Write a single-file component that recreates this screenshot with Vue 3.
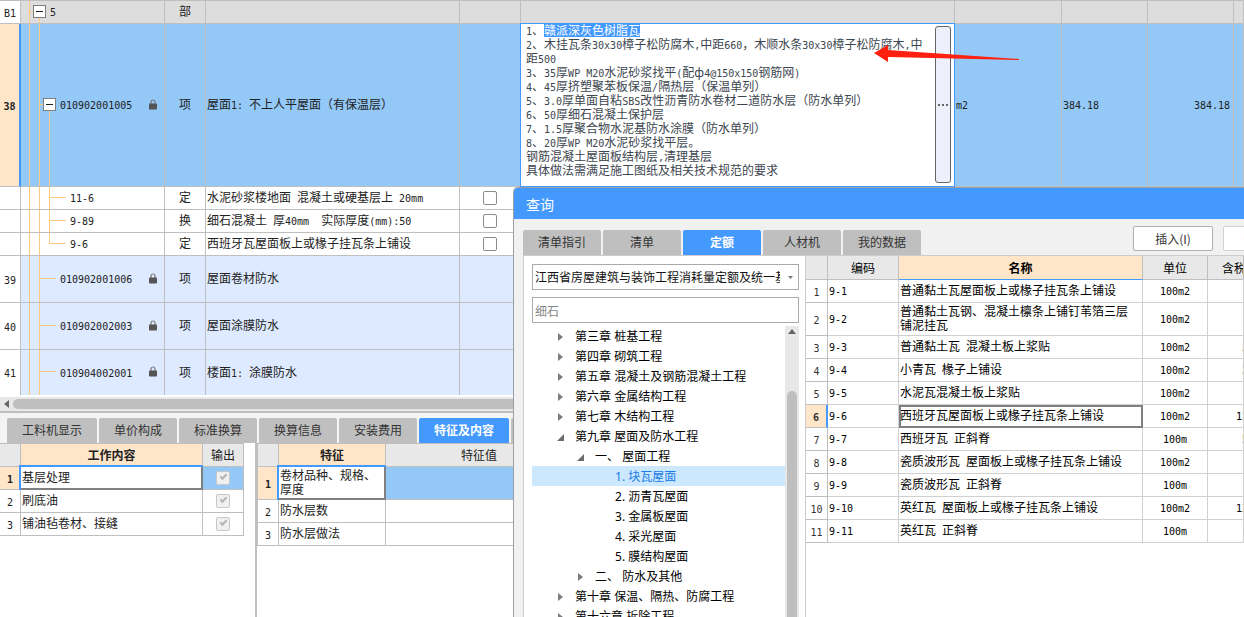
<script setup>
import { h, ref } from 'vue'

// Sets half-width runs in the grid's monospaced face, next to full-width characters.
const Txt = (props) =>
  String(props.t)
    .split(/([\x20-\x7e]+)/)
    .map((s, i) => (i % 2 ? h('span', { class: 'lat' }, s) : s))
Txt.props = ['t']

const billRows = [
  { no: 'B1', kind: 'part', code: '5', type: '部', name: '' },
  { no: '38', kind: 'current', code: '010902001005', lock: true, type: '项', name: '屋面1: 不上人平屋面（有保温层）', unit: 'm2', expr: '384.18', qty: '384.18' },
  { no: '', kind: 'sub', code: '11-6', type: '定', name: '水泥砂浆楼地面 混凝土或硬基层上 20mm', check: true },
  { no: '', kind: 'sub', code: '9-89', type: '换', name: '细石混凝土 厚40mm  实际厚度(mm):50', check: true },
  { no: '', kind: 'sub last', code: '9-6', type: '定', name: '西班牙瓦屋面板上或椽子挂瓦条上铺设', check: true },
  { no: '39', kind: 'item', code: '010902001006', lock: true, type: '项', name: '屋面卷材防水' },
  { no: '40', kind: 'item', code: '010902002003', lock: true, type: '项', name: '屋面涂膜防水' },
  { no: '41', kind: 'item end', code: '010904002001', lock: true, type: '项', name: '楼面1: 涂膜防水' },
]

const featureLines = [
  '2、木挂瓦条30x30樟子松防腐木,中距660，木顺水条30x30樟子松防腐木,中距500',
  '3、35厚WP M20水泥砂浆找平(配ф4@150x150钢筋网)',
  '4、45厚挤塑聚苯板保温/隔热层（保温单列）',
  '5、3.0厚单面自粘SBS改性沥青防水卷材二道防水层（防水单列）',
  '6、50厚细石混凝土保护层',
  '7、1.5厚聚合物水泥基防水涂膜（防水单列）',
  '8、20厚WP M20水泥砂浆找平层。',
  '钢筋混凝土屋面板结构层,清理基层',
  '具体做法需满足施工图纸及相关技术规范的要求',
]

const bottomTabs = ['工料机显示', '单价构成', '标准换算', '换算信息', '安装费用', '特征及内容']
const bottomTab = ref('特征及内容')
const works = ['基层处理', '刷底油', '铺油毡卷材、接缝']
const features = ['卷材品种、规格、厚度', '防水层数', '防水层做法']

const queryTabs = ['清单指引', '清单', '定额', '人材机', '我的数据']
const queryTab = ref('定额')
const library = ref('a')
const keyword = ref('细石')

const chapters = [
  { lv: 1, s: 'shut', t: '第三章 桩基工程' },
  { lv: 1, s: 'shut', t: '第四章 砌筑工程' },
  { lv: 1, s: 'shut', t: '第五章 混凝土及钢筋混凝土工程' },
  { lv: 1, s: 'shut', t: '第六章 金属结构工程' },
  { lv: 1, s: 'shut', t: '第七章 木结构工程' },
  { lv: 1, s: 'open', t: '第九章 屋面及防水工程' },
  { lv: 2, s: 'open', t: '一、 屋面工程' },
  { lv: 3, s: 'leaf', t: '1. 块瓦屋面', on: true },
  { lv: 3, s: 'leaf', t: '2. 沥青瓦屋面' },
  { lv: 3, s: 'leaf', t: '3. 金属板屋面' },
  { lv: 3, s: 'leaf', t: '4. 采光屋面' },
  { lv: 3, s: 'leaf', t: '5. 膜结构屋面' },
  { lv: 2, s: 'shut', t: '二、 防水及其他' },
  { lv: 1, s: 'shut', t: '第十章 保温、隔热、防腐工程' },
  { lv: 1, s: 'shut', t: '第十六章 拆除工程' },
]

const quotas = [
  { code: '9-1', name: '普通黏土瓦屋面板上或椽子挂瓦条上铺设', unit: '100m2' },
  { code: '9-2', name: '普通黏土瓦钢、混凝土檩条上铺钉苇箔三层铺泥挂瓦', unit: '100m2', price: '1' },
  { code: '9-3', name: '普通黏土瓦 混凝土板上浆贴', unit: '100m2', price: '2' },
  { code: '9-4', name: '小青瓦 椽子上铺设', unit: '100m2', price: '2' },
  { code: '9-5', name: '水泥瓦混凝土板上浆贴', unit: '100m2' },
  { code: '9-6', name: '西班牙瓦屋面板上或椽子挂瓦条上铺设', unit: '100m2', price: '13' },
  { code: '9-7', name: '西班牙瓦 正斜脊', unit: '100m', price: '5' },
  { code: '9-8', name: '瓷质波形瓦 屋面板上或椽子挂瓦条上铺设', unit: '100m2' },
  { code: '9-9', name: '瓷质波形瓦 正斜脊', unit: '100m' },
  { code: '9-10', name: '英红瓦 屋面板上或椽子挂瓦条上铺设', unit: '100m2', price: '12' },
  { code: '9-11', name: '英红瓦 正斜脊', unit: '100m', price: '1' },
]
</script>

<template>
  <div class="app">
    <table class="grid bill">
      <colgroup>
        <col class="w-no" /><col class="w-code" /><col class="w-type" /><col class="w-name" /><col class="w-check" />
        <col class="w-feature" /><col class="w-unit" /><col class="w-qty" /><col class="w-qty" /><col />
      </colgroup>
      <tbody>
        <tr v-for="(r, i) in billRows" :key="i" :class="r.kind">
          <th scope="row"><Txt :t="r.no" /></th>
          <td class="code">
            <div class="node">
              <button v-if="r.kind === 'part' || r.kind === 'current'" class="toggle" aria-label="折叠"></button>
              <i v-else class="stub"></i>
              <span class="num"><Txt :t="r.code" /></span>
              <svg v-if="r.lock" class="lock" width="8" height="11" viewBox="0 0 8 11">
                <path d="M2 5V3a2 2 0 0 1 4 0v2" fill="none" stroke="#777" stroke-width="1.2" />
                <rect y="4.5" width="8" height="6" rx=".8" fill="#555" />
              </svg>
            </div>
          </td>
          <td class="mid">{{ r.type }}</td>
          <td><Txt :t="r.name" /></td>
          <td class="tick"><input v-if="r.check" type="checkbox" class="box" :aria-label="r.code" /></td>
          <td class="feature">
            <div v-if="r.kind === 'current'" class="editor">
              <div class="lines" contenteditable="true" role="textbox" aria-multiline="true" aria-label="项目特征" spellcheck="false">
                <div><Txt t="1、" /><mark>赣派深灰色树脂瓦</mark></div>
                <div v-for="l in featureLines" :key="l"><Txt :t="l" /></div>
              </div>
              <button class="more" aria-label="编辑项目特征"><i></i><i></i><i></i></button>
            </div>
          </td>
          <td><Txt :t="r.unit || ''" /></td>
          <td><Txt :t="r.expr || ''" /></td>
          <td class="right"><Txt :t="r.qty || ''" /></td>
          <td></td>
        </tr>
      </tbody>
    </table>

    <div class="hscroll">
      <svg width="5" height="8" viewBox="0 0 5 8"><path d="M5 0v8L0 4z" fill="#666" /></svg>
      <div class="hthumb"></div>
    </div>

    <section class="bottom">
      <nav class="tabs">
        <button v-for="t in bottomTabs" :key="t" :class="{ on: t === bottomTab, long: t.length > 4 }" @click="bottomTab = t">{{ t }}</button>
        <button aria-label="更多"></button>
      </nav>
      <div class="panes">
        <div class="pane works">
          <table class="grid detail">
            <colgroup><col class="w-no" /><col class="w-work" /><col class="w-out" /></colgroup>
            <thead>
              <tr><th></th><th class="hot">工作内容</th><th>输出</th></tr>
            </thead>
            <tbody>
              <tr v-for="(w, i) in works" :key="w" :class="{ sel: i === 0 }">
                <th scope="row"><Txt :t="i + 1" /></th>
                <td class="first">{{ w }}</td>
                <td class="tick"><input type="checkbox" class="box" checked disabled :aria-label="w" /></td>
              </tr>
            </tbody>
          </table>
        </div>
        <div class="pane">
          <table class="grid detail edged">
            <colgroup><col class="w-no2" /><col class="w-feat" /><col class="w-value" /></colgroup>
            <thead>
              <tr><th></th><th class="hot">特征</th><th>特征值</th></tr>
            </thead>
            <tbody>
              <tr v-for="(f, i) in features" :key="f" :class="{ sel: i === 0, two: i === 0 }">
                <th scope="row"><Txt :t="i + 1" /></th>
                <td class="first">{{ f }}</td>
                <td></td>
              </tr>
            </tbody>
          </table>
        </div>
      </div>
    </section>

    <section class="dialog" role="dialog" aria-label="查询">
      <header>查询</header>
      <div class="bar">
        <nav class="tabs">
          <button v-for="t in queryTabs" :key="t" :class="{ on: t === queryTab }" @click="queryTab = t">{{ t }}</button>
        </nav>
        <div class="actions">
          <button>插入(I)</button>
          <button disabled>替换(R)</button>
        </div>
      </div>
      <div class="body">
        <div class="side">
          <div class="pick">
            <select v-model="library" aria-label="定额库">
              <option value="a">江西省房屋建筑与装饰工程消耗量定额及统一基价表</option>
            </select>
            <svg width="5" height="3" viewBox="0 0 5 3"><path d="M0 0h5L2.5 3z" fill="#777" /></svg>
          </div>
          <input v-model="keyword" class="search" aria-label="搜索" />
          <div class="treebox">
            <ul class="tree">
              <li v-for="c in chapters" :key="c.t" :class="['lv' + c.lv, { on: c.on }]">
                <span class="mark">
                  <svg v-if="c.s === 'shut'" width="5" height="8" viewBox="0 0 5 8"><path d="M0 0l5 4-5 4z" fill="#7c7c7c" /></svg>
                  <svg v-if="c.s === 'open'" width="7" height="7" viewBox="0 0 7 7"><path d="M7 0v7H0z" fill="#6c6c6c" /></svg>
                </span>
                {{ c.t }}
              </li>
            </ul>
            <div class="vscroll">
              <svg width="8" height="5" viewBox="0 0 8 5"><path d="M0 5h8L4 0z" fill="#666" /></svg>
              <div class="vthumb"></div>
            </div>
          </div>
        </div>
        <div class="result">
          <table class="grid quota">
            <colgroup><col class="w-qno" /><col class="w-qcode" /><col class="w-qname" /><col class="w-qunit" /><col /></colgroup>
            <thead>
              <tr><th></th><th>编码</th><th class="hot">名称</th><th>单位</th><th class="tax">含税</th></tr>
            </thead>
            <tbody>
              <tr v-for="(q, i) in quotas" :key="q.code" :class="{ sel: i === 5, two: i === 1 }">
                <th scope="row"><Txt :t="i + 1" /></th>
                <td><Txt :t="q.code" /></td>
                <td class="qname"><Txt :t="q.name" /></td>
                <td class="mid"><Txt :t="q.unit" /></td>
                <td class="price" :class="{ wide: (q.price || '').length > 1 }"><Txt :t="q.price || ''" /></td>
              </tr>
            </tbody>
          </table>
        </div>
      </div>
    </section>

    <svg class="arrow" width="146" height="18" viewBox="0 0 146 18">
      <path d="M0 8L14 0V5L145 14V15L14 12V17Z" fill="#ff2010" />
    </svg>
  </div>
</template>

<style>
body {
  background: #fff;
}
</style>

<style scoped>
.app {
  position: relative;
  display: flex;
  flex-direction: column;
  height: 100vh;
  overflow: hidden;
  box-sizing: border-box;
  border-top: 1px solid #bfbfbf;
  background: #fff;
  color: #222;
  font: 12px/14px "Noto Sans CJK SC", sans-serif;
}
.app *, .app *::before, .app *::after { box-sizing: border-box; }
.app :deep(.lat) {
  font-family: "DejaVu Sans Mono", monospace;
  font-size: 10px;
  line-height: 1px;
  white-space: pre-wrap;
}
button, input, select { margin: 0; padding: 0; font: inherit; color: inherit; }
ul { margin: 0; padding: 0; list-style: none; }

.grid { border-collapse: separate; border-spacing: 0; table-layout: fixed; }
.grid td, .grid th {
  height: 23px;
  padding: 0 2px 2px 1px;
  border-right: 1px solid #bfbfbf;
  border-bottom: 1px solid #bfbfbf;
  text-align: left;
  vertical-align: middle;
  font-weight: 400;
}
.grid th, .grid td.tick { text-align: center; padding: 0; }
.grid tbody th { padding-bottom: 1px; }
.grid td.mid { text-align: center; padding: 0 0 2px; }
.grid td.right { text-align: right; padding-right: 3px; }

.w-no { width: 21px; }
.w-code { width: 144px; }
.w-type { width: 41px; }
.w-name { width: 254px; }
.w-check { width: 61px; }
.w-feature { width: 434px; }
.w-unit { width: 107px; }
.w-qty { width: 86px; }
.w-work { width: 182px; }
.w-out { width: 41px; }
.w-no2 { width: 22px; }
.w-feat { width: 107px; }
.w-value { width: 187px; }
.w-qno { width: 22px; }
.w-qcode { width: 71px; }
.w-qname { width: 244px; }
.w-qunit { width: 65px; }

.bill { width: 100%; flex: none; }
.part td { background-color: #ddd; }
.current td { height: 163px; background-color: #93c8f7; }
.current th { background: #ffe6c8; border-right: 2px solid #49f; font-weight: 700; }
.item td { height: 47px; background-color: #deeaff; }
.grid .end td, .grid .end th { height: 45px; border-bottom: 0; }

.grid td.code {
  padding: 0 0 2px;
  background-image: linear-gradient(#ffc880, #ffc880), linear-gradient(#ffc880, #ffc880), linear-gradient(#ffc880, #ffc880);
  background-repeat: no-repeat;
  background-position: 8px 0, 18px 0, 28px 0;
  background-size: 1px 100%, 1px 100%, 0 0;
}
.grid .part td.code { background-position: 8px 0, 18px 100%; background-size: 1px 100%, 1px 50%, 0 0; }
.grid .current td.code { background-position: 8px 0, 18px 0, 28px 100%; background-size: 1px 100%, 1px 100%, 1px 50%; }
.grid .sub td.code { background-size: 1px 100%, 1px 100%, 1px 100%; }
.grid .last td.code { background-size: 1px 100%, 1px 100%, 1px 50%; }
.node { display: flex; align-items: center; padding: 0 7px 0 19px; }
.part .node { padding-left: 9px; }
.sub .node { padding-left: 29px; }
.stub { width: 16px; height: 1px; background: #ffc880; }
.num { margin-left: 4px; }
.lock { margin-left: auto; }
.toggle {
  position: relative;
  width: 13px;
  height: 13px;
  margin-left: 3px;
  border: 1px solid #808080;
  background: #fff;
}
.toggle::before { content: ""; position: absolute; left: 2px; top: 5px; width: 7px; height: 1px; background: #222; }
.toggle::after { content: ""; position: absolute; left: -4px; top: 5px; width: 3px; height: 1px; background: #ffc880; }

.box {
  appearance: none;
  position: relative;
  display: block;
  width: 14px;
  height: 14px;
  margin: 0 auto;
  border: 1px solid #8c8c8c;
  border-radius: 2px;
  background: #fff;
}
.box:disabled { border-color: #c8c8c8; background: #f0f0f0; }
.box:checked::after {
  content: "";
  position: absolute;
  left: 3px;
  top: 2px;
  width: 7px;
  height: 4px;
  border: solid #b4b4b4;
  border-width: 0 0 2px 2px;
  transform: rotate(-45deg);
}

.grid td.feature { padding: 0; }
.editor {
  display: flex;
  height: 162px;
  padding: 2px 3px 3px 5px;
  background: #fff;
  outline: 1px solid #49f;
  color: #3c4650;
}
.lines { flex: 1; margin-top: -3px; padding-right: 6px; outline: 0; }
mark { display: inline-block; height: 14px; vertical-align: top; background: #49f; color: #fff; }
.more {
  display: flex;
  align-items: center;
  justify-content: center;
  gap: 2px;
  width: 16px;
  border: 1px solid #666;
  border-radius: 3px;
  background: #edf0fa;
}
.more i { width: 2px; height: 2px; background: #666; }

.hscroll {
  display: flex;
  align-items: center;
  gap: 4px;
  flex: none;
  height: 16px;
  margin-top: 2px;
  padding-left: 4px;
  border-bottom: 2px solid #bfbfbf;
  background: #e8e8e8;
}
.hthumb { flex: 1; height: 10px; border-radius: 5px; background: #bfbfbf; }

.bottom { display: flex; flex-direction: column; flex: 1; min-height: 0; background: #f4f4f4; }
.tabs { display: flex; gap: 2px; }
.bottom .tabs { padding: 5px 0 0 7px; }
.tabs button {
  width: 78px;
  height: 25px;
  padding-bottom: 2px;
  border: 0;
  border-radius: 2px 2px 0 0;
  background: #bfbfbf;
  color: #333;
}
.tabs button.long { width: 90px; }
.tabs button.on { background: #49f; color: #fff; font-weight: 700; }
.panes { display: flex; flex: 1; min-height: 0; background: #fff; }
.pane { overflow: hidden; }
.works { width: 257px; border-right: 2px solid #bfbfbf; }
.detail thead th { height: 24px; border-top: 1px solid #bfbfbf; background: #e8e8e8; }
.grid .hot { background: #ffe6c8; font-weight: 700; }
.edged th:first-child { border-left: 1px solid #bfbfbf; }
.detail .first { padding: 0 4px 2px 1px; }
.detail .sel td { background: #93c8f7; }
.grid .sel th { background: #ffe6c8; font-weight: 700; }
.detail .sel .first {
  padding-bottom: 1px;
  background: #fff;
  box-shadow: -1px -1px 0 1px #49f;
  border-right: 2px solid #808080;
  border-bottom: 2px solid #808080;
  position: relative;
}
.grid .two td { height: 33px; }

.dialog {
  position: absolute;
  left: 513px;
  top: 186px;
  right: 0;
  bottom: 0;
  display: flex;
  flex-direction: column;
  overflow: hidden;
  border: solid #9a9fa5;
  border-width: 1px 0 0 1px;
  border-radius: 5px 0 0 0;
  background: #f1f1f1;
}
.dialog header { flex: none; height: 31px; padding: 8px 12px; background: #49f; color: #fff; font-size: 14px; line-height: 17px; }
.bar { display: flex; justify-content: space-between; flex: none; height: 36px; padding-left: 9px; }
.bar .tabs { padding-top: 11px; }
.actions { display: flex; gap: 10px; margin: 7px -59px 0 0; }
.actions button {
  width: 80px;
  height: 25px;
  border: 1px solid #b0b0b0;
  border-radius: 2px;
  background: #fff;
  color: #333;
}
.actions button:disabled { border-color: #d0d0d0; color: #bbb; }

.body { display: flex; flex: 1; min-height: 0; padding-left: 9px; }
.side {
  display: flex;
  flex-direction: column;
  flex: none;
  width: 282px;
  padding: 8px 0 0 8px;
  border: solid #ccc;
  border-width: 1px 0 0 1px;
  background: #fff;
}
.pick { position: relative; width: 267px; }
.pick select, .search {
  display: block;
  width: 267px;
  height: 26px;
  border: 1px solid #aaa;
  border-radius: 0;
  background: #fff;
}
.pick select { appearance: none; padding: 0 18px 0 2px; color: #111; }
.pick svg { position: absolute; right: 6px; top: 12px; }
.search { margin-top: 7px; padding: 0 2px; color: #888; outline: 0; }
.treebox { display: flex; flex: 1; min-height: 0; margin-top: 3px; width: 267px; }
.tree { flex: 1; overflow: hidden; color: #000; font-family: "Noto Sans", "Noto Sans CJK SC", sans-serif; }
.tree li { display: flex; align-items: center; height: 20px; padding-top: 2px; white-space: pre; }
.tree .on { background: #cce8ff; color: #1a7ae6; }
.mark { display: flex; justify-content: center; width: 20px; padding-right: 2px; margin-right: 1px; }
.lv1 { padding-left: 19px; }
.lv2 { padding-left: 39px; }
.lv3 { padding-left: 59px; }
.vscroll { display: flex; flex-direction: column; align-items: center; width: 14px; padding-top: 3px; background: #e8e8e8; }
.vthumb { flex: 1; width: 10px; margin-top: 57px; border-radius: 5px 5px 0 0; background: #bfbfbf; }

.result { flex: 1; min-width: 0; border: solid #ccc; border-width: 1px 0 0 1px; background: #fff; overflow: hidden; }
.quota { width: 100%; color: #000; }
.quota thead th { height: 24px; background: #e8e8e8; }
.quota thead .hot { background: #ffe6c8; border-bottom-color: #49f; }
.quota thead .tax { text-align: left; padding-left: 14px; white-space: nowrap; overflow: hidden; }
.quota tbody td { border-color: #d0d0d0; }
.quota th:first-child { color: #333; }
.quota tbody .sel th { border-right: 2px solid #49f; }
.quota .qname { padding-right: 8px; }
.quota .sel .qname { outline: 2px solid #808080; outline-offset: -2px; }
.quota td.price { padding: 0 0 2px 34px; white-space: nowrap; overflow: hidden; }
.quota td.wide { padding-left: 28px; }

.arrow { position: absolute; left: 874px; top: 44px; pointer-events: none; }
</style>
